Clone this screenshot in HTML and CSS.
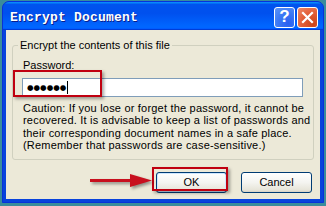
FILE: index.html
```html
<!DOCTYPE html>
<html>
<head>
<meta charset="utf-8">
<link rel="stylesheet" href="styles.css">
</head>
<body>
<div class="window">
  <div class="titlebar">
    <span class="title">Encrypt Document</span>
    <div class="tbtns">
      <span class="tbtn help">?</span>
      <span class="tbtn close"><svg width="13" height="13" viewBox="0 0 13 13"><path d="M2 2 L11 11 M11 2 L2 11" stroke="#fff" stroke-width="2.2" stroke-linecap="square"/></svg></span>
    </div>
  </div>
  <div class="client">
    <fieldset class="group">
      <legend>Encrypt the contents of this file</legend>
      <div class="label">Password:</div>
      <div class="input"><span class="dots">●●●●●●</span><span class="caret"></span></div>
      <p class="caution">Caution: If you lose or forget the password, it cannot be<br>recovered. It is advisable to keep a list of passwords and<br>their corresponding document names in a safe place.<br>(Remember that passwords are case-sensitive.)</p>
    </fieldset>
    <div class="buttons">
      <button class="btn default">OK</button>
      <button class="btn">Cancel</button>
    </div>
  </div>
  <div class="annot pwbox"></div>
  <div class="annot okbox"></div>
  <svg class="arrow" width="70" height="24" viewBox="0 0 70 24"><path d="M2 10.5 H46" stroke="#c8101e" stroke-width="3"/><path d="M42 4 L64 10.5 L42 17 Z" fill="#c8101e"/></svg>
</div>
</body>
</html>
```
FILE: styles.css
```css
html, body { margin: 0; padding: 0; }
body {
  width: 326px; height: 206px; overflow: hidden;
  background: #3a8c9c;
  font-family: "Liberation Sans", Arial, sans-serif;
  font-size: 11px;
  color: #000;
}
.window {
  position: relative;
  box-sizing: border-box;
  margin: 1px 0 0 2px;
  width: 322px; height: 202px;
  background: #0843dc;
  border: 1px solid #0831d9;
  border-radius: 7px 7px 0 0;
  display: flex; flex-direction: column;
  padding: 0 3px 3px;
}
.titlebar {
  height: 28px;
  margin: 0 -3px;
  padding: 0 5px 0 7px;
  border-radius: 6px 6px 0 0;
  background: linear-gradient(#0997ff 0, #0053ee 9%, #0050ee 40%, #0066ff 86%, #0066ff 92%, #005bff 95%, #003dd7 97%, #003dd7 100%);
  display: flex; align-items: center; justify-content: space-between;
}
.title {
  font-family: "Liberation Mono", "Courier New", monospace;
  font-weight: bold; font-size: 13px;
  color: #fff;
  text-shadow: 1px 1px 0 #0a1e8c;
  margin-top: 2px;
  letter-spacing: 0.2px;
}
.tbtns { display: flex; gap: 2px; margin-top: 2px; }
.tbtn {
  box-sizing: border-box;
  width: 21px; height: 21px;
  border: 1px solid #fff; border-radius: 3px;
  display: flex; align-items: center; justify-content: center;
  color: #fff; font-weight: bold; font-size: 17px;
  font-family: "Liberation Sans", Arial, sans-serif;
}
.help { background: radial-gradient(circle at 70% 80%, #2a5ff0 0, #3b78f5 50%, #5c95f8 100%); }
.close { background: radial-gradient(circle at 80% 85%, #cc4419 0, #e3603a 55%, #ee8a6a 100%); }
.client {
  flex: 1;
  background: #ece9d8;
  padding: 9px 6px 0 6px;
  display: flex; flex-direction: column;
}
.group {
  margin: 0;
  border: 1px solid #d0d0bf;
  border-radius: 3px;
  padding: 3px 9px 7px 10px;
  min-width: 0;
}
.group legend {
  margin-left: -5px;
  padding: 0 2px;
  color: #000;
}
.label { line-height: 13px; margin-top: 5px; }
.input {
  box-sizing: border-box;
  height: 19px; margin-top: 6px; margin-left: -1px; width: 281px;
  border: 1px solid #7f9db9; background: #fff;
  display: flex; align-items: center; padding-left: 4px;
}
.dots { font-size: 7.5px; letter-spacing: 0; font-family: "DejaVu Sans", sans-serif; line-height: 12px; }
.caret { width: 1px; height: 13px; background: #000; margin-left: 1px; }
.caution { margin: 5px 0 0 0; line-height: 12.4px; letter-spacing: 0.2px; white-space: nowrap; }
.buttons {
  display: flex; justify-content: flex-end; gap: 14px;
  padding: 12px 2px 0 0;
}
.btn {
  box-sizing: border-box;
  width: 71px; height: 21px;
  border: 1px solid #003c74; border-radius: 3px;
  background: linear-gradient(#fff 0, #f4f4f0 50%, #e6e4d8 90%, #d6d0c5 100%);
  font-family: "Liberation Sans", Arial, sans-serif; font-size: 11px;
  color: #000; padding: 0;
}
.btn.default { box-shadow: inset 0 0 0 1px #cee7ff, inset 0 -1px 0 1px #6982ee; }
.annot {
  position: absolute;
  border: 2px solid #c00010;
  box-shadow: 2px 2px 3px rgba(0,0,0,0.35);
}
.pwbox { left: 10px; top: 68px; width: 85px; height: 23px; }
.okbox { left: 149px; top: 165px; width: 72px; height: 20px; }
.arrow {
  position: absolute; left: 85px; top: 168px;
  filter: drop-shadow(2px 2px 1.5px rgba(0,0,0,0.4));
}
```
